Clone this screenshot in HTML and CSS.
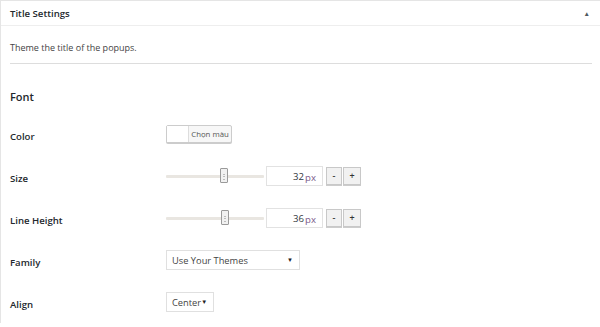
FILE: index.html
```html
<!DOCTYPE html>
<html>
<head>
<meta charset="utf-8">
<link rel="stylesheet" href="styles.css">
</head>
<body>
<div class="panel">
  <div class="panel-head">
    <span class="panel-title">Title Settings</span>
    <span class="toggle">&#9650;</span>
  </div>
  <div class="panel-body">
    <p class="desc">Theme the title of the popups.</p>
    <div class="sep"></div>
    <div class="row row-font"><span class="heading">Font</span></div>
    <div class="row">
      <span class="label">Color</span>
      <div class="field">
        <button class="color-btn"><span class="swatch"></span><span class="color-text">Chọn màu</span></button>
      </div>
    </div>
    <div class="row">
      <span class="label">Size</span>
      <div class="field">
        <div class="slider"><span class="track"></span><span class="handle" style="left:54px"><i></i></span></div>
        <div class="num"><span class="val">32</span><span class="unit">px</span></div>
        <div class="steps"><span class="step">-</span><span class="step">+</span></div>
      </div>
    </div>
    <div class="row">
      <span class="label">Line Height</span>
      <div class="field">
        <div class="slider"><span class="track"></span><span class="handle" style="left:55px"><i></i></span></div>
        <div class="num"><span class="val">36</span><span class="unit">px</span></div>
        <div class="steps"><span class="step">-</span><span class="step">+</span></div>
      </div>
    </div>
    <div class="row">
      <span class="label">Family</span>
      <div class="field">
        <div class="select select-wide"><span>Use Your Themes</span><span class="caret">&#9660;</span></div>
      </div>
    </div>
    <div class="row">
      <span class="label">Align</span>
      <div class="field">
        <div class="select select-narrow"><span>Center</span><span class="caret">&#9660;</span></div>
      </div>
    </div>
  </div>
</div>
</body>
</html>
```
FILE: styles.css
```css
html, body {
  margin: 0;
  padding: 0;
  background: #fff;
}
body {
  font-family: "Open Sans", "Noto Sans", sans-serif;
  color: #23282d;
  width: 600px;
  height: 327px;
  overflow: hidden;
}
.panel {
  border-top: 1px solid #e5e5e5;
  border-left: 1px solid #e5e5e5;
  background: #fff;
}
.panel-head {
  height: 24px;
  border-bottom: 1px solid #eeeeee;
  display: flex;
  align-items: center;
  justify-content: space-between;
  padding: 0 10px 0 9px;
}
.panel-title {
  font-size: 9.6px;
  font-weight: 600;
  color: #23282d;
}
.toggle {
  font-size: 6.5px;
  color: #50575e;
  margin-top: 1px;
}
.panel-body {
  padding: 0 8px 0 9px;
}
.desc {
  margin: 0;
  padding-top: 15px;
  height: 22px;
  line-height: 14px;
  font-size: 9px;
  color: #444;
}
.sep {
  border-top: 1px solid #ddd;
  margin-top: 0;
}
.row {
  display: flex;
  align-items: center;
  height: 42px;
}
.row-font {
  height: 49px;
  align-items: flex-start;
  padding-top: 25px;
  box-sizing: border-box;
}
.heading {
  font-size: 11px;
  font-weight: 600;
  line-height: 16px;
}
.label {
  width: 156px;
  flex: none;
  font-size: 9.6px;
  font-weight: 600;
  padding-top: 5px;
}
.field {
  display: flex;
  align-items: center;
}
.color-btn {
  display: flex;
  align-items: stretch;
  height: 18px;
  width: 66px;
  padding: 0;
  border: 1px solid #ccc;
  border-radius: 2px;
  background: #f7f7f7;
  box-shadow: 0 1px 0 #ccc;
  box-sizing: border-box;
  font-family: inherit;
}
.swatch {
  width: 21px;
  background: #fff;
  border-right: 1px solid #ddd;
}
.color-text {
  flex: 1;
  font-size: 7.8px;
  color: #555;
  line-height: 16px;
  text-align: center;
}
.slider {
  position: relative;
  width: 98px;
  height: 16px;
}
.track {
  position: absolute;
  left: 0;
  right: 0;
  top: 7px;
  height: 3px;
  background: #e9e6e1;
  border-radius: 1px;
}
.handle {
  position: absolute;
  top: 0;
  width: 8px;
  height: 15px;
  box-sizing: border-box;
  border: 1px solid #9a9a9a;
  background: #f1f1f1;
  border-radius: 1px;
}
.handle i {
  position: absolute;
  left: 2px;
  top: 5px;
  width: 2px;
  height: 4px;
  border-top: 1px solid #bbb;
  border-bottom: 1px solid #bbb;
}
.handle i::after {
  content: "";
  position: absolute;
  left: 0;
  top: 1px;
  width: 2px;
  height: 1px;
  background: #bbb;
}
.num {
  margin-left: 2px;
  width: 57px;
  height: 20px;
  box-sizing: border-box;
  border: 1px solid #e2e2e2;
  display: flex;
  align-items: center;
  justify-content: flex-end;
  padding-right: 6px;
  background: #fff;
}
.val {
  font-size: 9.6px;
  color: #32373c;
}
.unit {
  font-size: 9.6px;
  color: #7a5a8a;
  margin-left: 1px;
  position: relative;
  top: 1px;
}
.steps {
  display: flex;
  margin-left: 3px;
  gap: 1px;
  margin-top: -1px;
}
.step {
  width: 16px;
  height: 18px;
  box-sizing: border-box;
  border: 1px solid #c8c8c8;
  background: #f1f1f1;
  box-shadow: 0 1px 0 #ccc;
  font-size: 9px;
  font-weight: 600;
  color: #333;
  display: flex;
  align-items: center;
  justify-content: center;
}
.step + .step {
  width: 18px;
}
.select {
  height: 20px;
  box-sizing: border-box;
  border: 1px solid #e0e0e0;
  display: flex;
  align-items: center;
  justify-content: space-between;
  padding: 0 6px 0 5px;
  font-size: 9.3px;
  color: #444;
  background: #fff;
}
.select-wide {
  width: 134px;
}
.select-narrow {
  width: 48px;
}
.caret {
  font-size: 6px;
  color: #222;
}
```
